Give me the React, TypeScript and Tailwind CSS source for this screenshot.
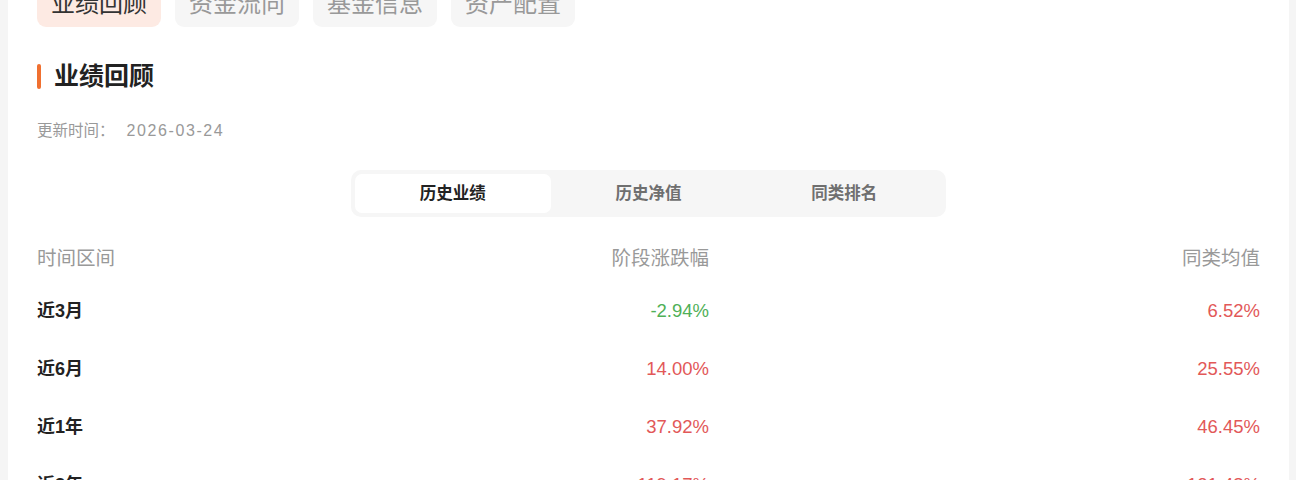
import React from "react";

const FONT = { fontFamily: '"Liberation Sans", "Noto Sans CJK SC", sans-serif' };

const tabs = ["业绩回顾", "资金流向", "基金信息", "资产配置"];
const segs = ["历史业绩", "历史净值", "同类排名"];

const rows = [
  { label: "近3月", v1: "-2.94%", v2: "6.52%" },
  { label: "近6月", v1: "14.00%", v2: "25.55%" },
  { label: "近1年", v1: "37.92%", v2: "46.45%" },
  { label: "近3年", v1: "119.17%", v2: "121.48%" },
];

function color(v: string) {
  return v.startsWith("-") ? "text-[#4fb057]" : "text-[#e25858]";
}

export default function App() {
  return (
    <div className="w-[1296px] h-[480px] overflow-hidden bg-[#f5f5f5]" style={FONT}>
      <div className="mx-[8px] w-[1281px] bg-white px-[29px] -mt-[19px] pb-[40px]">
        <div className="flex gap-[14px]">
          {tabs.map((t, i) => (
            <div
              key={t}
              className={`h-[46px] w-[124px] rounded-[9px] flex items-center justify-center text-[24px] leading-none ${
                i === 0 ? "bg-[#fdeae3] text-[#333]" : "bg-[#f6f6f6] text-[#999]"
              }`}
            >
              {t}
            </div>
          ))}
        </div>

        <div className="mt-[32px] flex items-center h-[35px]">
          <div className="w-[4px] h-[25px] rounded-[2px] bg-[#f07030]" />
          <div className="ml-[13px] text-[25px] font-bold text-[#222] leading-[35px]">业绩回顾</div>
        </div>

        <div className="mt-[26px] h-[21px] flex items-center text-[15.5px] text-[#999] leading-[21px]">
          <span>更新时间：</span>
          <span className="ml-[12px] text-[16px] tracking-[1.6px]">2026-03-24</span>
        </div>

        <div className="mt-[29px] flex justify-center">
          <div className="w-[595px] h-[47px] rounded-[10px] bg-[#f6f6f6] p-[4px] flex">
            {segs.map((s, i) => (
              <div
                key={s}
                className={`flex-1 flex items-center justify-center text-[16.5px] font-semibold rounded-[7px] ${
                  i === 0 ? "bg-white text-[#222]" : "text-[#6f6f6f]"
                }`}
              >
                {s}
              </div>
            ))}
          </div>
        </div>

        <div className="mt-[19px] grid grid-cols-[1fr_200px_551px] h-[46px] items-center text-[19.5px] text-[#999]">
          <div>时间区间</div>
          <div className="text-right">阶段涨跌幅</div>
          <div className="text-right">同类均值</div>
        </div>

        {rows.map((r) => (
          <div key={r.label} className="grid grid-cols-[1fr_200px_551px] h-[58px] items-center text-[18.5px]">
            <div className="font-bold text-[#222] text-[18px]">{r.label}</div>
            <div className={`text-right ${color(r.v1)}`}>{r.v1}</div>
            <div className={`text-right ${color(r.v2)}`}>{r.v2}</div>
          </div>
        ))}
      </div>
    </div>
  );
}
